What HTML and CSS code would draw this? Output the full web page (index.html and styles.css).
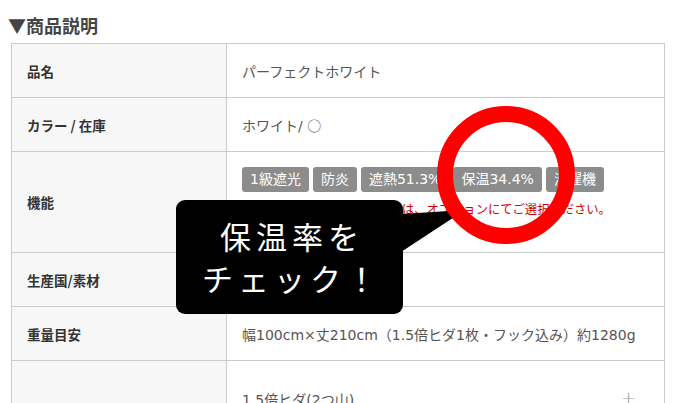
FILE: index.html
```html
<!DOCTYPE html>
<html lang="ja">
<head>
<meta charset="utf-8">
<link rel="stylesheet" href="styles.css">
</head>
<body>
<div class="page">
  <h2 class="heading">▼商品説明</h2>
  <div class="spec">
    <div class="row">
      <div class="label">品名</div>
      <div class="value">パーフェクトホワイト</div>
    </div>
    <div class="row">
      <div class="label">カラー / 在庫</div>
      <div class="value"><span>ホワイト/&nbsp;<span class="mark">○</span></span></div>
    </div>
    <div class="row row-tall">
      <div class="label">機能</div>
      <div class="value value-top">
        <div class="tags">
          <span class="tag">1級遮光</span>
          <span class="tag">防炎</span>
          <span class="tag">遮熱51.3%</span>
          <span class="tag">保温34.4%</span>
          <span class="tag">洗濯機</span>
        </div>
        <p class="note">※形状記憶加工・タッセル等は、オプションにてご選択ください。</p>
      </div>
    </div>
    <div class="row">
      <div class="label">生産国/素材</div>
      <div class="value">中国/ポリエステル</div>
    </div>
    <div class="row">
      <div class="label">重量目安</div>
      <div class="value">幅100cm×丈210cm（1.5倍ヒダ1枚・フック込み）約1280g</div>
    </div>
    <div class="row row-last">
      <div class="label"></div>
      <div class="value value-top">
        <div class="option"><span>1.5倍ヒダ(2つ山)</span><span class="plus">+</span></div>
      </div>
    </div>
  </div>

  <div class="callout">
    <svg class="pointer" width="70" height="50" viewBox="0 0 70 50"><polygon points="0,14 64,10 0,52" fill="#000"/></svg>
    <div class="callout-text">保温率を<br>チェック！</div>
  </div>
  <svg class="ring" width="160" height="160" viewBox="0 0 160 160"><circle cx="80" cy="80" r="61" fill="none" stroke="#ff0000" stroke-width="16"/></svg>
</div>
</body>
</html>
```

FILE: styles.css
```css
html, body {
  margin: 0;
  padding: 0;
  background: #fff;
}
body {
  width: 680px;
  height: 403px;
  overflow: hidden;
  font-family: "Noto Sans CJK JP", "Noto Sans", sans-serif;
}
.page {
  position: relative;
  padding: 13px 15px 0 11px;
}
.heading {
  margin: 0 0 6px -3px;
  font-size: 18px;
  line-height: 24px;
  font-weight: 700;
  color: #444;
}
.spec {
  border: 1px solid #cccccc;
  border-bottom: none;
}
.row {
  display: grid;
  grid-template-columns: 215px 1fr;
  height: 54px;
  box-sizing: border-box;
  border-bottom: 1px solid #cccccc;
}
.row-tall {
  height: 101px;
}
.row-last {
  height: 80px;
}
.label {
  box-sizing: border-box;
  background: #f7f7f7;
  border-right: 1px solid #cccccc;
  padding: 0 15px;
  display: flex;
  align-items: center;
  font-size: 13.5px;
  font-weight: 700;
  color: #333;
}
.value {
  padding: 0 15px;
  display: flex;
  align-items: center;
  font-family: "DejaVu Sans", "Noto Sans CJK JP", sans-serif;
  font-size: 14px;
  color: #555;
}
.mark {
  font-family: "Noto Sans CJK JP", sans-serif;
}
.value-top {
  flex-direction: column;
  align-items: stretch;
  justify-content: flex-start;
  padding-top: 15px;
}
.row-last .value-top {
  padding-top: 28px;
}
.tags {
  display: flex;
  gap: 4px;
}
.tag {
  display: inline-block;
  height: 25px;
  line-height: 25px;
  padding: 0 8px;
  border-radius: 3px;
  background: #8c8c8c;
  color: #fff;
  font-size: 14px;
}
.note {
  margin: 8px 0 0;
  font-family: "Noto Sans CJK JP", sans-serif;
  font-size: 12.3px;
  line-height: 18px;
  color: #d10000;
}
.option {
  display: flex;
  justify-content: space-between;
  padding-right: 13px;
  font-size: 14px;
  color: #555;
}
.plus {
  color: #999;
  font-size: 18px;
  line-height: 18px;
  font-weight: 300;
}
.callout {
  position: absolute;
  left: 176px;
  top: 200px;
  width: 227px;
  height: 114px;
  background: #000;
  border-radius: 9px;
  display: flex;
  align-items: center;
  justify-content: center;
}
.pointer {
  position: absolute;
  left: 225px;
  top: 0;
  overflow: visible;
}
.callout-text {
  color: #fff;
  font-size: 31px;
  line-height: 42px;
  letter-spacing: 5px;
  text-align: center;
  padding-left: 5px;
  font-weight: 400;
}
.ring {
  position: absolute;
  left: 426px;
  top: 95px;
}
```
